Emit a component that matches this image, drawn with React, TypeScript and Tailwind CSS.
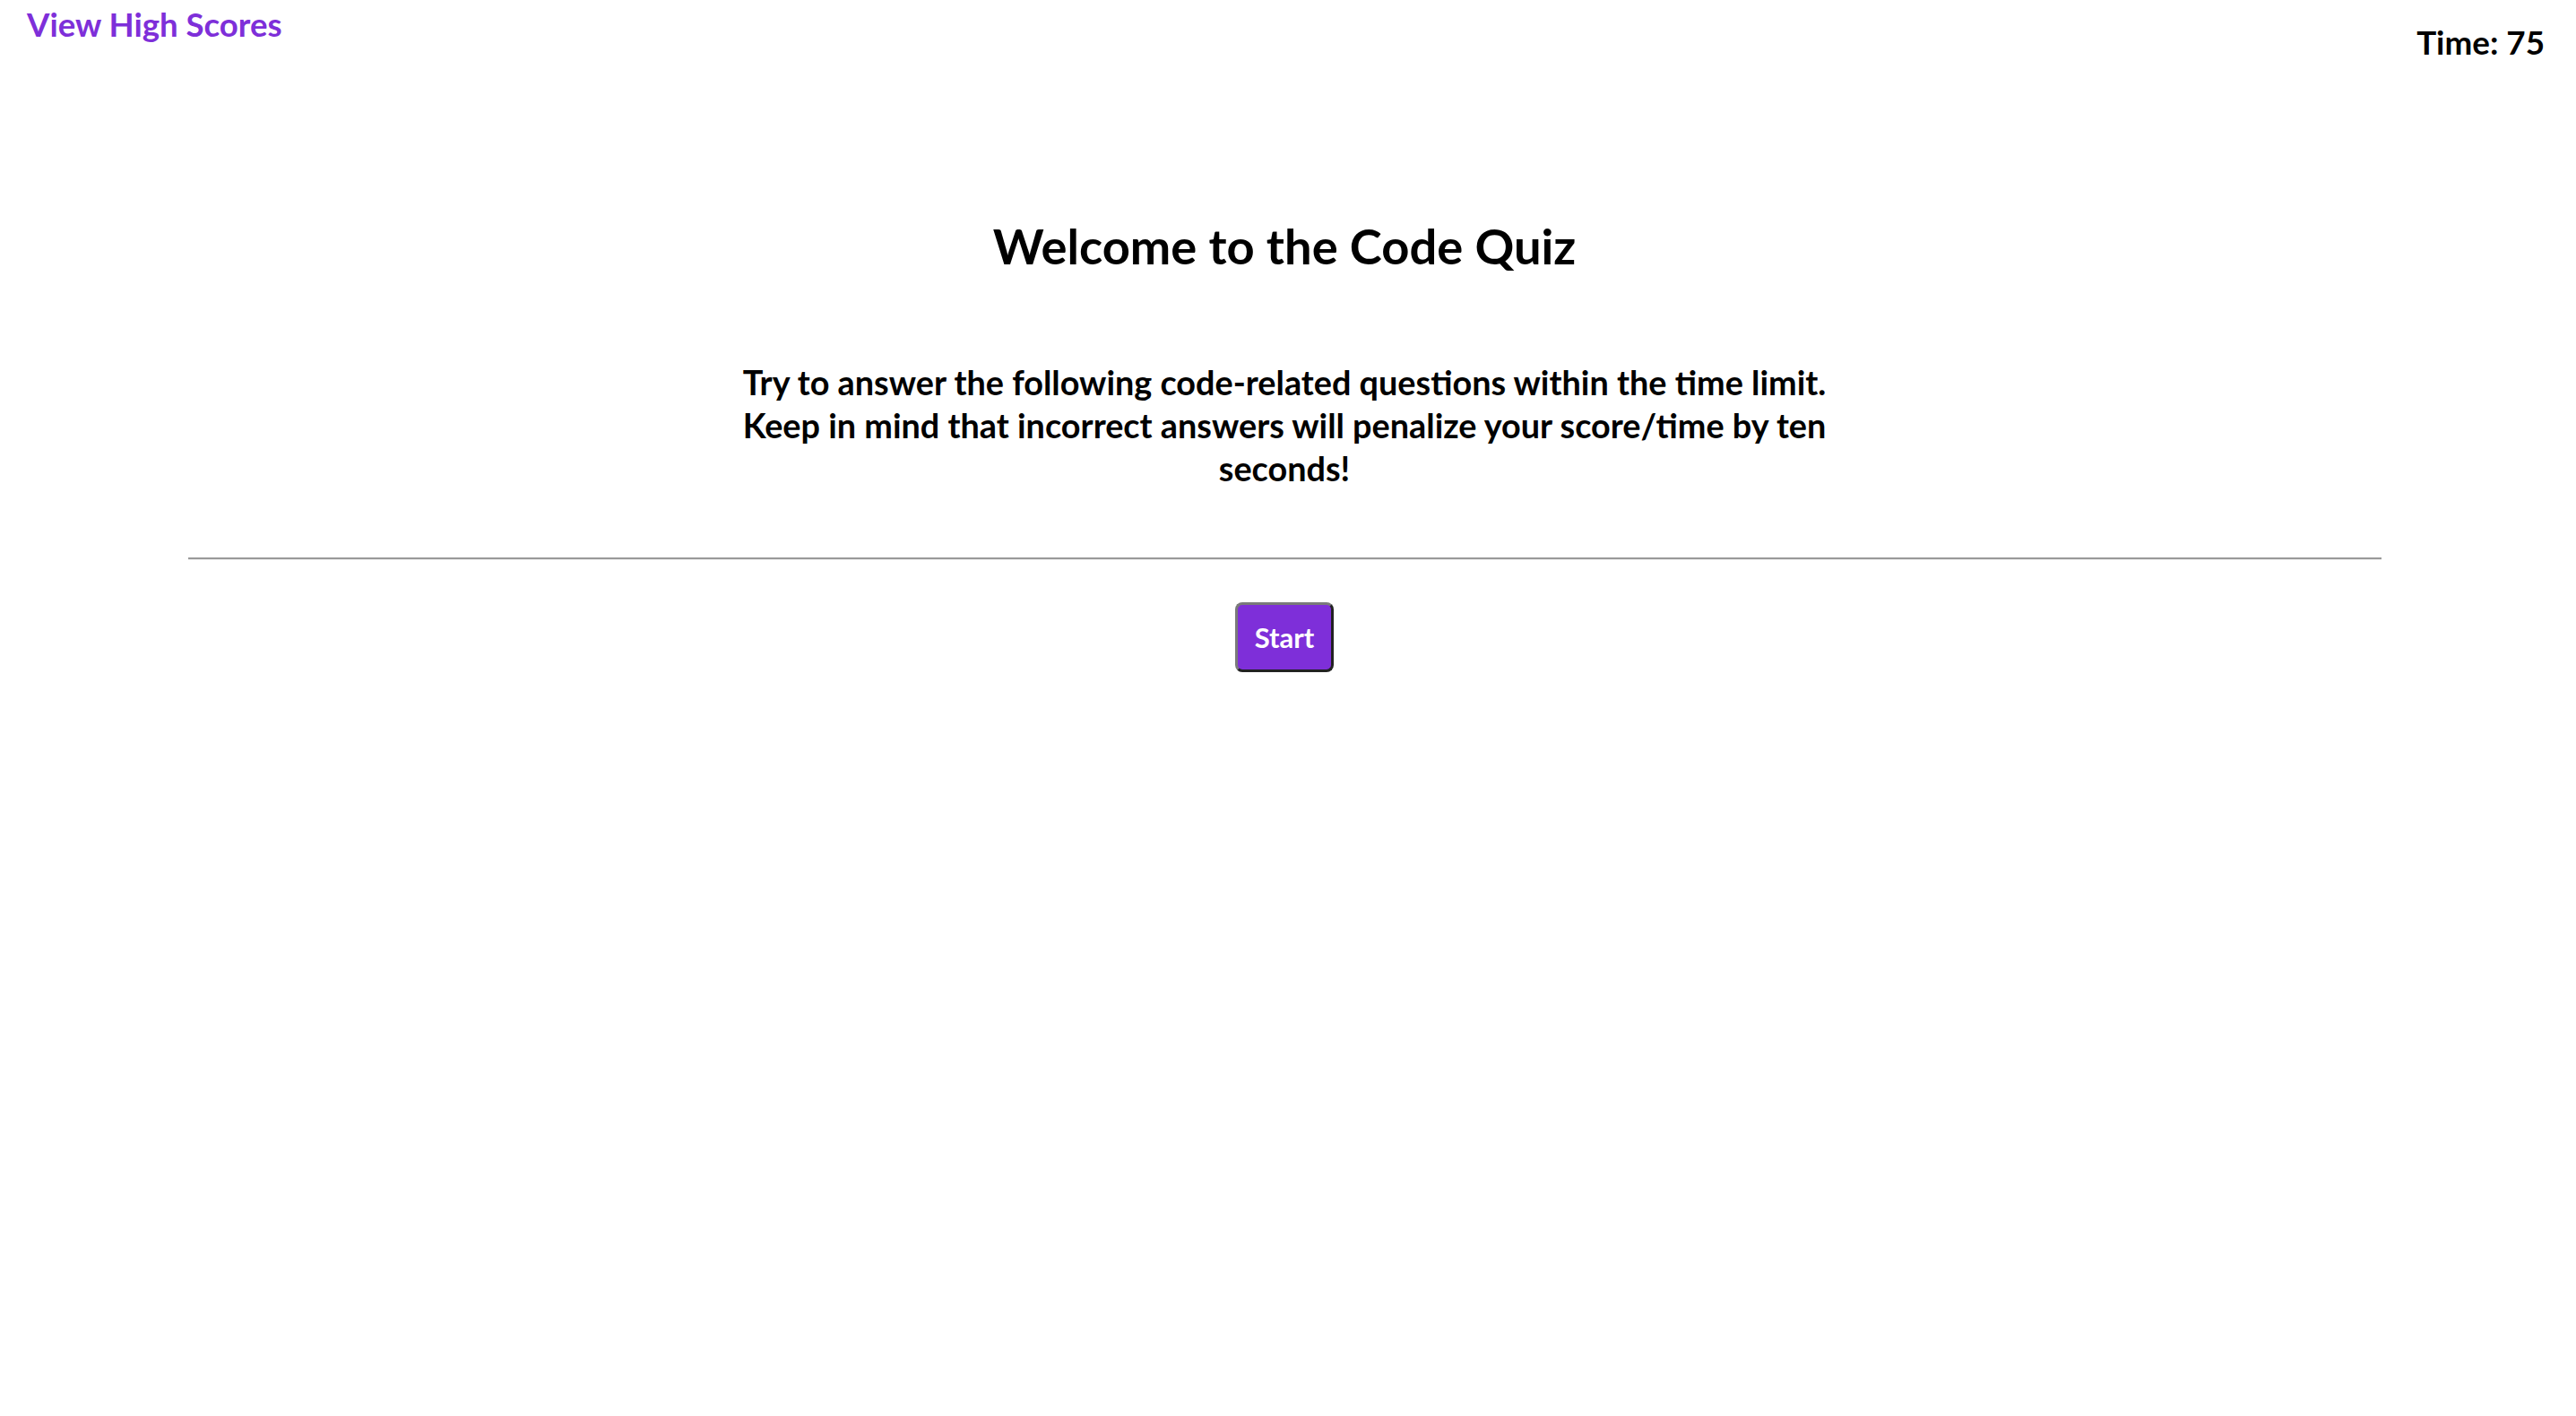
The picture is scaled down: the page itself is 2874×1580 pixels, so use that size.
const PURPLE = "text-[#7e2fd9]"

const Header: React.FC = () => {
  return (
    <header className="flex justify-between items-start pl-[30px] pr-[35px] pt-[9px]">
      <a href="#" className={`text-[36.6px] leading-none font-bold ${PURPLE}`}>View High Scores</a>
      <div className="mt-[20px] text-[36.8px] leading-none font-bold text-black">Time: 75</div>
    </header>
  )
}

export default function App() {
  return (
    <div className="min-h-screen bg-white font-['Lato',sans-serif] text-black">
      <Header />
      <main className="flex flex-col items-center pr-[8px]">
        <h1 className="mt-[181px] text-[54.3px] leading-none font-bold">Welcome to the Code Quiz</h1>
        <p className="mt-[102px] max-w-[1240px] text-center text-[37.8px] leading-[47.7px] font-bold">
          Try to answer the following code-related questions within the time limit. Keep in mind that incorrect answers will penalize your score/time by ten seconds!
        </p>
        <hr className="mt-[76px] w-[2447px] border-0 border-t-2 border-t-[#999999] border-b border-b-[#ececec]" />
        <button className="mt-[47px] w-[110px] h-[78px] rounded-[8px] border-[3px] border-t-[#7a7a7a] border-l-[#7a7a7a] border-r-[#222222] border-b-[#222222] bg-[#7e2fd9] text-white text-[31px] font-bold leading-none">
          Start
        </button>
      </main>
    </div>
  )
}
